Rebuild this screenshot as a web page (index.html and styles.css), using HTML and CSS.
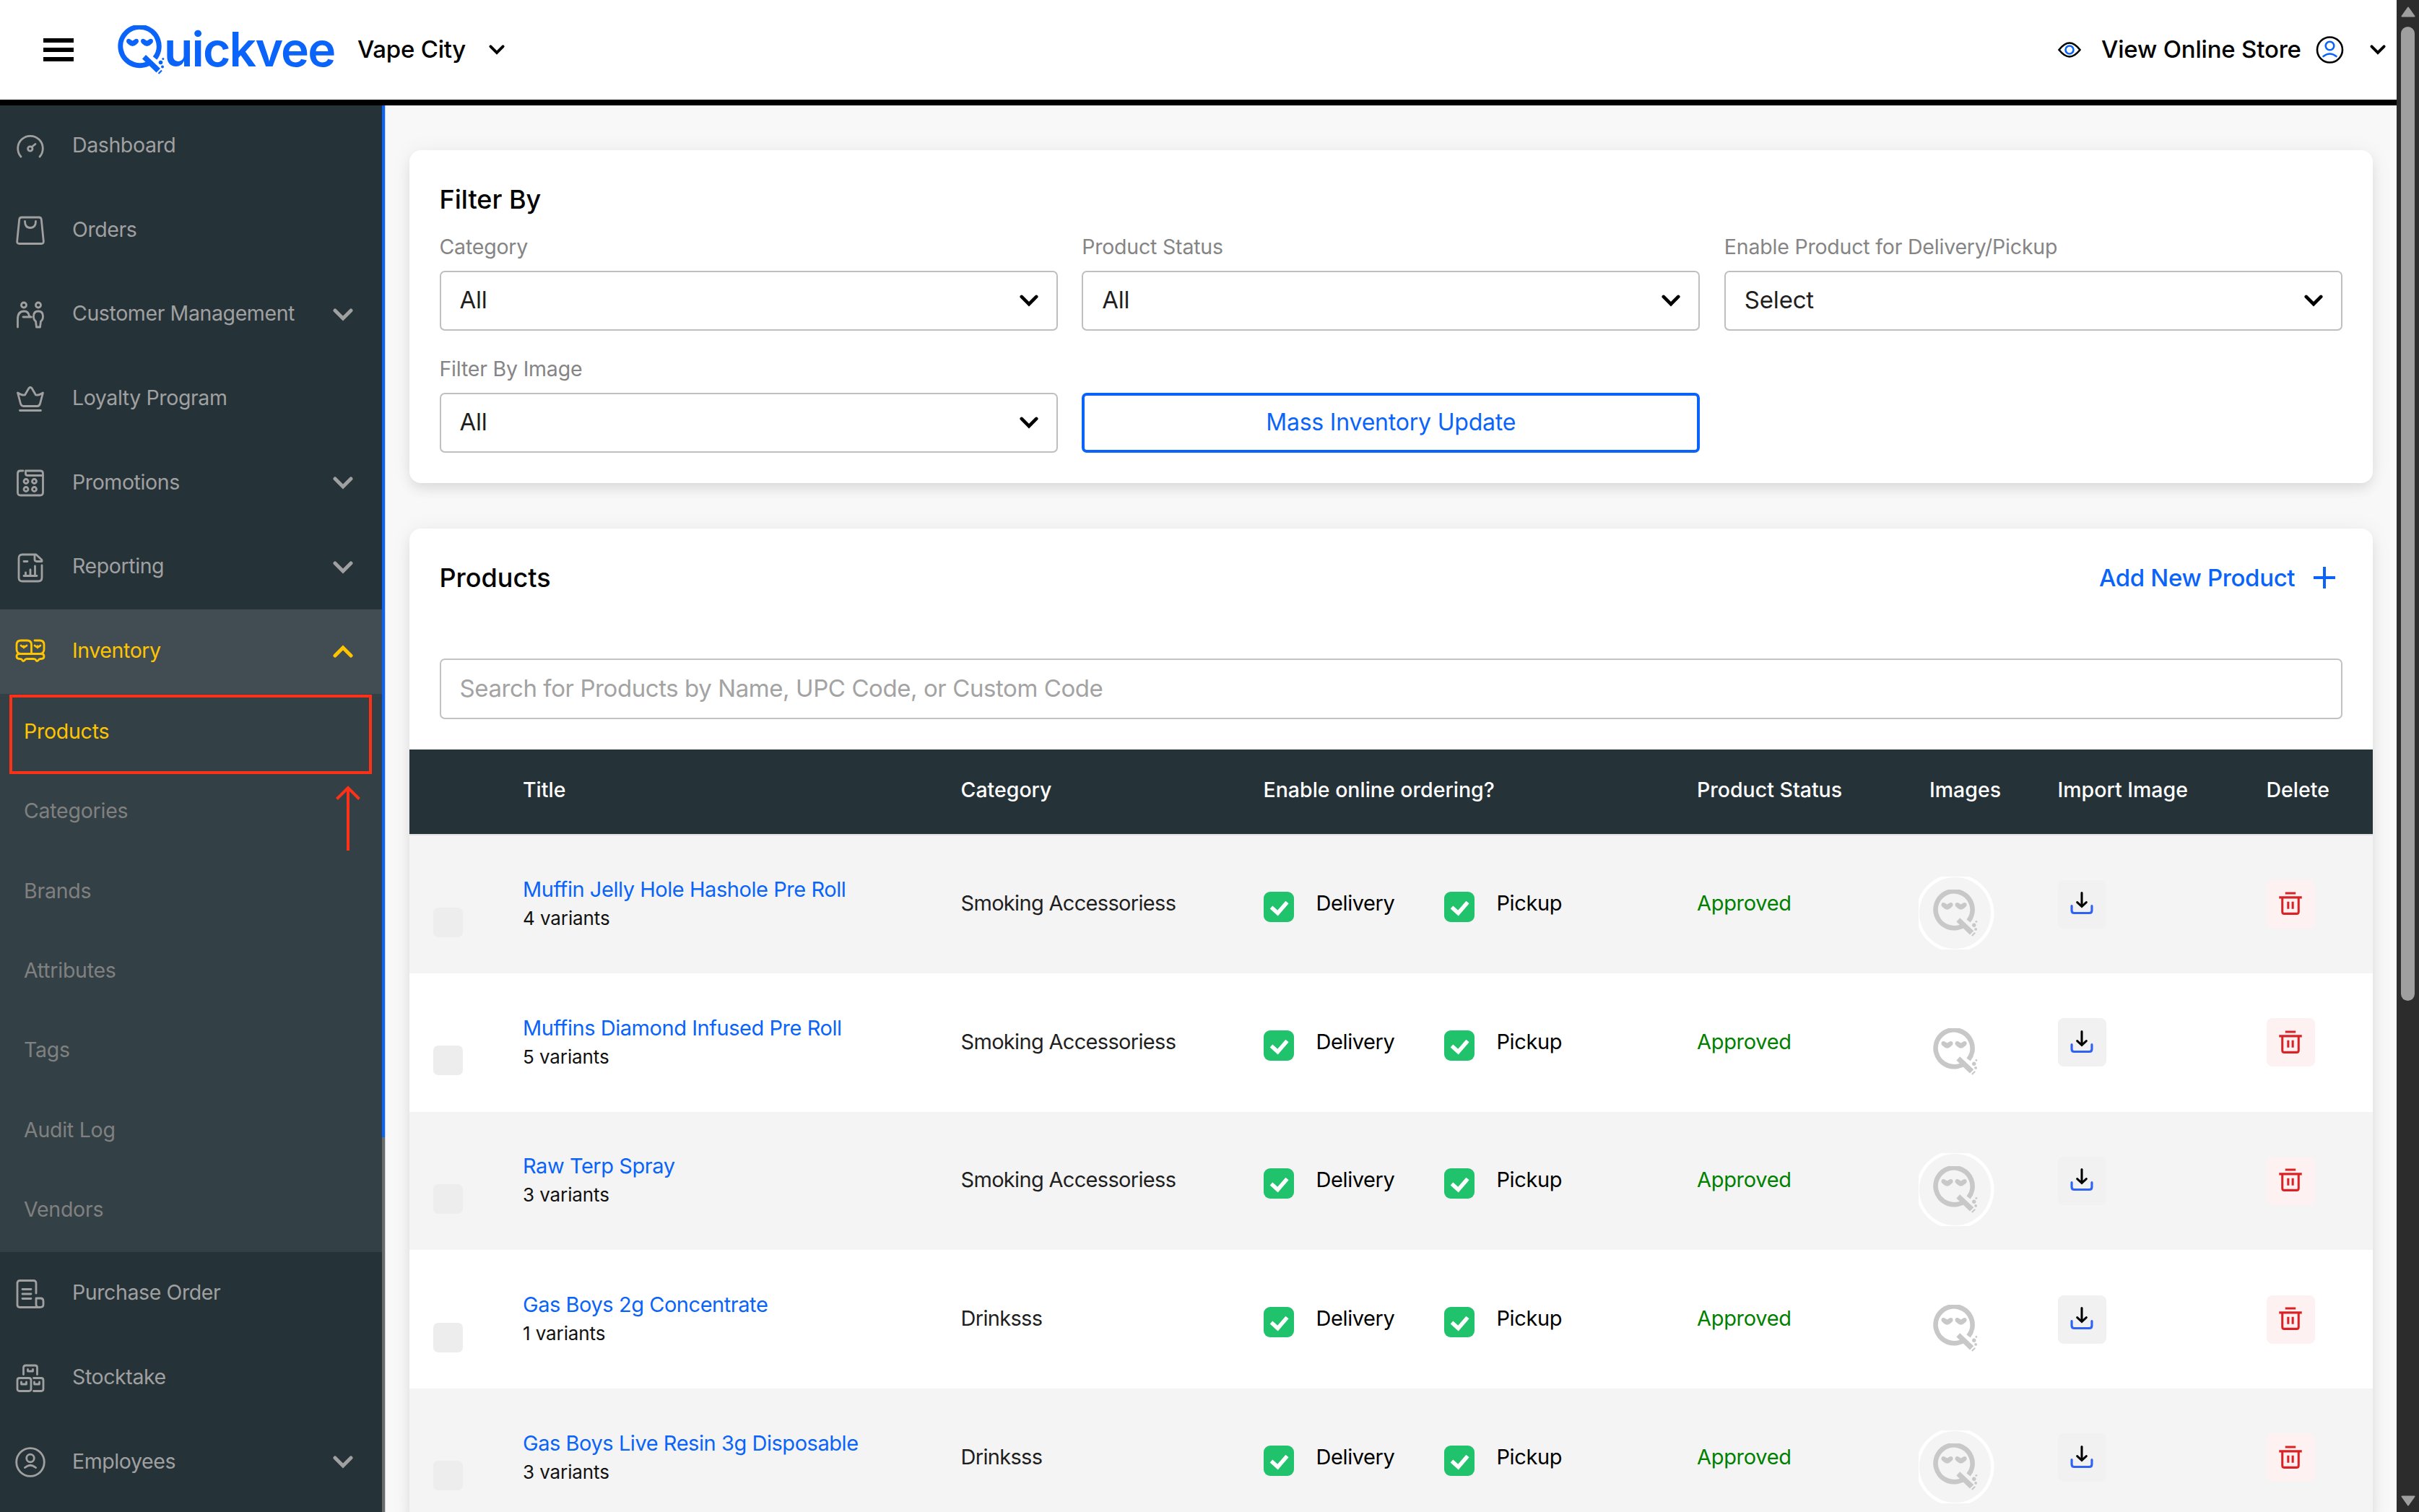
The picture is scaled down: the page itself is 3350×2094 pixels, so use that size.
FILE: index.html
```html
<!DOCTYPE html>
<html lang="en">
<head>
    <meta charset="UTF-8">
    <meta name="viewport" content="width=device-width, initial-scale=1.0">
    <title>Quickvee - Products</title>
    <link rel="stylesheet" href="styles.css">
</head>
<body>

    <!-- shared icons -->
    <svg class="sprite">
        <symbol id="chevron" viewBox="0 0 28 18">
            <path d="M3 3l11 11L25 3" fill="none" stroke="currentColor" stroke-width="5" stroke-linecap="round"/>
        </symbol>
        <symbol id="q-face" viewBox="0 0 66 68">
            <path d="M48 50A26.700 26.700 0 1 1 52.500 45.500" fill="none" stroke="currentColor" stroke-width="7"/>
            <path d="M13 22q.5-4 4.500-3l4 2.500 4-2.500q4-1 4.500 3 0 2.500-2.500 4-3 3-6 3t-6-3q-2.500-1.500-2.500-4zM33 22q.5-4 4.500-3l4 2.500 4-2.500q4-1 4.500 3 0 2.500-2.500 4-3 3-6 3t-6-3q-2.500-1.500-2.500-4z" fill="currentColor"/>
            <path d="M35 46.500l5-5.500 20 19-5.500 5.500z" fill="currentColor"/>
            <path d="M57.500 67l4.500-4.500" stroke="currentColor" stroke-width="2.200"/>
            <circle cx="60.500" cy="51.500" r="2.800" fill="currentColor"/>
            <circle cx="63.800" cy="46.500" r="1.500" fill="currentColor"/>
            <circle cx="63" cy="57.500" r="2" fill="currentColor"/>
        </symbol>
        <symbol id="check" viewBox="0 0 42 42">
            <path d="M10.500 21.500l9 8L32.500 14.500" fill="none" stroke="#fff" stroke-width="5.500"/>
        </symbol>
        <symbol id="import" viewBox="0 0 40 40">
            <path d="M20 4v20M13 18.500l7 6.500 7-6.500" fill="none" stroke="#000" stroke-width="3.400" stroke-linecap="round"/>
            <path d="M4.500 24v7q0 4 4 4h23q4 0 4-4v-7" fill="none" stroke="#2f62f5" stroke-width="3.500" stroke-linecap="round"/>
        </symbol>
        <symbol id="trash" viewBox="0 0 40 40">
            <path d="M12 4.500h16M2.500 11h35M7.500 11v22q0 3 3 3h19q3 0 3-3V11M16.500 17.500v11M23.500 17.500v11" fill="none" stroke="#d92226" stroke-width="3.400"/>
        </symbol>
    </svg>

    <div class="window">
        <div class="app">

            <header class="topbar">
                <div class="burger"><span></span><span></span><span></span></div>
                <div class="logo">
                    <svg class="logo-q"><use href="#q-face"/></svg>
                    <span class="logo-text">uickvee</span>
                </div>
                <span class="store-name">Vape City</span>
                <svg class="top-chevron"><use href="#chevron"/></svg>
                <svg class="eye" viewBox="0 0 32 22" fill="none" stroke-width="2.600">
                    <path d="M1.500 11Q9 1.500 16 1.500T30.500 11Q23 20.500 16 20.500T1.500 11z" stroke="#000"/>
                    <circle cx="16" cy="11" r="5.500" stroke="#0a64f9"/>
                </svg>
                <span class="view-store">View Online Store</span>
                <svg class="user" viewBox="0 0 38 38" fill="none" stroke-width="2.600">
                    <circle cx="19" cy="19" r="17.500" stroke="#000"/>
                    <circle cx="19" cy="13.500" r="5.800" stroke="#0a64f9"/>
                    <path d="M10 28q9-7 18 0" stroke="#0a64f9" stroke-linecap="round"/>
                </svg>
                <svg class="top-chevron last"><use href="#chevron"/></svg>
            </header>

            <div class="body">
                <aside class="sidebar">
                    <nav class="menu">
                        <div class="menu-item">
                            <svg class="icon" viewBox="0 0 42 42"><path d="M8 36A17.300 17.300 0 1 1 34 36M23 22.500l5-4"/><circle cx="20.800" cy="25" r="3.200"/></svg>
                            <span>Dashboard</span>
                        </div>
                        <div class="menu-item">
                            <svg class="icon" viewBox="0 0 42 42"><path d="M9 3h24q3 0 3.300 3l3 30q.3 3.500-3 3.500h-30.600q-3.300 0-3-3.500l3-30q.3-3 3.300-3zM13.500 8.500q0 9 7.500 9t7.500-9"/></svg>
                            <span>Orders</span>
                        </div>
                        <div class="menu-item">
                            <svg class="icon" viewBox="0 0 42 42"><circle cx="12" cy="7.500" r="3.500"/><circle cx="32" cy="7.500" r="3.500"/><path d="M3.500 38V27q0-11 9-11 6 0 7 7l3 1H11M32 16q6.500 0 6.500 7 0 5-3 7l-1 8h-5l-1-8q-3-2-3-7 0-7 6.500-7z"/></svg>
                            <span>Customer Management</span>
                            <svg class="arrow"><use href="#chevron"/></svg>
                        </div>
                        <div class="menu-item">
                            <svg class="icon" viewBox="0 0 42 42"><path d="M3.500 13l4 15q1 3.500 4 3.500h19q3 0 4-3.500l4-15q-6 4-10 3l-5.500-9.500q-2-2-4 0L13.500 16q-4 1-10-3zM6.500 37.500h29"/></svg>
                            <span>Loyalty Program</span>
                        </div>
                        <div class="menu-item">
                            <svg class="icon" viewBox="0 0 42 42"><path d="M11 4H7Q3.500 4 3.500 8v26q0 4 4 4h27q4 0 4-4V8q0-4-4-4H14.500v4q0 2.500 3 2.500h21"/><circle cx="15" cy="18.500" r="3"/><circle cx="26.500" cy="18.500" r="3"/><circle cx="15" cy="29.500" r="3"/><circle cx="26.500" cy="29.500" r="3"/></svg>
                            <span>Promotions</span>
                            <svg class="arrow"><use href="#chevron"/></svg>
                        </div>
                        <div class="menu-item">
                            <svg class="icon" viewBox="0 0 42 42"><path d="M37 18v17q0 5-5 5H10q-5 0-5-5V8q0-5 5-5h19l8 7.500v2h-7q-3 0-3-3V3M12 12.500h5M12 32.500h18M14.500 32v-4M21 32v-8M27.500 32V19"/></svg>
                            <span>Reporting</span>
                            <svg class="arrow"><use href="#chevron"/></svg>
                        </div>
                        <div class="menu-item active">
                            <svg class="icon" viewBox="0 0 42 42"><path d="M8 6h8.500q6 0 6 6v12.500H8q-6 0-6-6.500v-6q0-6 6-6zM27 6h7q6 0 6 6v6q0 6.500-6 6.500H22M8 13q4 4 8 0M27 13q4 4 8 0M12 14v2M31 14v2M6 24.500q-4 0-4 3.500t4 3.500h1q2 0 3 2t3 0q1-2 3-2h10q2 0 3 2t3 0q1-2 3-2h1q4 0 4-3.500t-4-3.500"/></svg>
                            <span>Inventory</span>
                            <svg class="arrow up"><use href="#chevron"/></svg>
                        </div>
                        <div class="submenu">
                            <div class="sub-item selected">Products</div>
                            <div class="sub-item">Categories</div>
                            <div class="sub-item">Brands</div>
                            <div class="sub-item">Attributes</div>
                            <div class="sub-item">Tags</div>
                            <div class="sub-item">Audit Log</div>
                            <div class="sub-item">Vendors</div>
                            <div class="mark-box"></div>
                            <svg class="mark-arrow" viewBox="0 0 36 90"><path d="M18 90V3M2.500 18.500L18 3l15.500 15.500" fill="none" stroke="#fc3118" stroke-width="4"/></svg>
                        </div>
                        <div class="menu-item">
                            <svg class="icon" viewBox="0 0 42 42"><path d="M29 20V6q0-3.500-3.500-3.500H6.500Q3 2.500 3 6v30q0 3.500 3.500 3.500H33M29 27h6q4 0 4 4v5q0 3.500-5 3.500t-5-3.500zM10 14.500h12M10 21h12M10 27.500h12"/></svg>
                            <span>Purchase Order</span>
                        </div>
                        <div class="menu-item">
                            <svg class="icon" viewBox="0 0 42 42"><path d="M11.500 15.500V6q0-3 3-3h13q3 0 3 3v9.500M6 20.500h13q3 0 3 3v12q0 3-3 3H6q-3 0-3-3v-12q0-3 3-3zM25.500 20.500H36q3 0 3 3v12q0 3-3 3H25.500M17.500 8.500v2.500h7V8.500M8.500 26v3h7v-3M26.500 26v3h7v-3"/></svg>
                            <span>Stocktake</span>
                        </div>
                        <div class="menu-item">
                            <svg class="icon" viewBox="0 0 42 42"><circle cx="21" cy="21" r="19.300"/><circle cx="21" cy="15.500" r="5.300"/><path d="M13.500 28.500q7.500-6.500 15 0"/></svg>
                            <span>Employees</span>
                            <svg class="arrow"><use href="#chevron"/></svg>
                        </div>
                    </nav>
                    <div class="side-scroll"><div class="side-thumb"></div></div>
                </aside>

                <main class="content">
                    <section class="card filter-card">
                        <h2>Filter By</h2>
                        <div class="filters">
                            <div>
                                <label>Category</label>
                                <div class="select"><span>All</span><svg><use href="#chevron"/></svg></div>
                            </div>
                            <div>
                                <label>Product Status</label>
                                <div class="select"><span>All</span><svg><use href="#chevron"/></svg></div>
                            </div>
                            <div>
                                <label>Enable Product for Delivery/Pickup</label>
                                <div class="select"><span>Select</span><svg><use href="#chevron"/></svg></div>
                            </div>
                            <div>
                                <label>Filter By Image</label>
                                <div class="select"><span>All</span><svg><use href="#chevron"/></svg></div>
                            </div>
                            <button class="mass-btn">Mass Inventory Update</button>
                        </div>
                    </section>

                    <section class="card products-card">
                        <div class="products-head">
                            <h2>Products</h2>
                            <span class="add-new">Add New Product</span>
                            <svg class="plus" viewBox="0 0 30 30"><path d="M15 0v30M0 15h30" stroke="#0a64f9" stroke-width="4"/></svg>
                        </div>
                        <div class="search">Search for Products by Name, UPC Code, or Custom Code</div>

                        <div class="row thead">
                            <span></span>
                            <span>Title</span>
                            <span>Category</span>
                            <span>Enable online ordering?</span>
                            <span>Product Status</span>
                            <span>Images</span>
                            <span>Import Image</span>
                            <span>Delete</span>
                        </div>

                        <div class="row odd">
                            <div class="pick"></div>
                            <div class="title"><a>Muffin Jelly Hole Hashole Pre Roll</a><small>4 variants</small></div>
                            <div class="cat">Smoking Accessoriess</div>
                            <div class="order"><i><svg><use href="#check"/></svg></i><span>Delivery</span><i><svg><use href="#check"/></svg></i><span>Pickup</span></div>
                            <div class="status">Approved</div>
                            <div class="thumb"><svg class="thumb-q"><use href="#q-face"/></svg></div>
                            <div class="btn import"><svg><use href="#import"/></svg></div>
                            <div class="btn delete"><svg><use href="#trash"/></svg></div>
                        </div>
                        <div class="row">
                            <div class="pick"></div>
                            <div class="title"><a>Muffins Diamond Infused Pre Roll</a><small>5 variants</small></div>
                            <div class="cat">Smoking Accessoriess</div>
                            <div class="order"><i><svg><use href="#check"/></svg></i><span>Delivery</span><i><svg><use href="#check"/></svg></i><span>Pickup</span></div>
                            <div class="status">Approved</div>
                            <div class="thumb"><svg class="thumb-q"><use href="#q-face"/></svg></div>
                            <div class="btn import"><svg><use href="#import"/></svg></div>
                            <div class="btn delete"><svg><use href="#trash"/></svg></div>
                        </div>
                        <div class="row odd">
                            <div class="pick"></div>
                            <div class="title"><a>Raw Terp Spray</a><small>3 variants</small></div>
                            <div class="cat">Smoking Accessoriess</div>
                            <div class="order"><i><svg><use href="#check"/></svg></i><span>Delivery</span><i><svg><use href="#check"/></svg></i><span>Pickup</span></div>
                            <div class="status">Approved</div>
                            <div class="thumb"><svg class="thumb-q"><use href="#q-face"/></svg></div>
                            <div class="btn import"><svg><use href="#import"/></svg></div>
                            <div class="btn delete"><svg><use href="#trash"/></svg></div>
                        </div>
                        <div class="row">
                            <div class="pick"></div>
                            <div class="title"><a>Gas Boys 2g Concentrate</a><small>1 variants</small></div>
                            <div class="cat">Drinksss</div>
                            <div class="order"><i><svg><use href="#check"/></svg></i><span>Delivery</span><i><svg><use href="#check"/></svg></i><span>Pickup</span></div>
                            <div class="status">Approved</div>
                            <div class="thumb"><svg class="thumb-q"><use href="#q-face"/></svg></div>
                            <div class="btn import"><svg><use href="#import"/></svg></div>
                            <div class="btn delete"><svg><use href="#trash"/></svg></div>
                        </div>
                        <div class="row odd">
                            <div class="pick"></div>
                            <div class="title"><a>Gas Boys Live Resin 3g Disposable</a><small>3 variants</small></div>
                            <div class="cat">Drinksss</div>
                            <div class="order"><i><svg><use href="#check"/></svg></i><span>Delivery</span><i><svg><use href="#check"/></svg></i><span>Pickup</span></div>
                            <div class="status">Approved</div>
                            <div class="thumb"><svg class="thumb-q"><use href="#q-face"/></svg></div>
                            <div class="btn import"><svg><use href="#import"/></svg></div>
                            <div class="btn delete"><svg><use href="#trash"/></svg></div>
                        </div>
                    </section>
                </main>
            </div>
        </div>

        <div class="page-scroll">
            <svg class="scroll-arrow" viewBox="0 0 20 15"><path d="M10 1.500L18.500 13.500H1.500z" fill="#9f9f9f" stroke="#9f9f9f" stroke-width="2" stroke-linejoin="round"/></svg>
            <div class="page-thumb"></div>
            <svg class="scroll-arrow down" viewBox="0 0 20 15"><path d="M10 1.500L18.500 13.500H1.500z" fill="#9f9f9f" stroke="#9f9f9f" stroke-width="2" stroke-linejoin="round"/></svg>
        </div>
    </div>

</body>
</html>
```
FILE: styles.css
```css
* {
    box-sizing: border-box;
}

body {
    margin: 0;
    font-family: Inter, 'Liberation Sans', sans-serif;
    font-size: 29px;
    color: #000;
    background: #f8f8f8;
    overflow: hidden;
}

.sprite {
    display: none;
}

.window {
    display: flex;
    height: 2094px;
    overflow: hidden;
}

.app {
    width: 3319px;
    display: flex;
    flex-direction: column;
}

/* top bar */
.topbar {
    flex: none;
    height: 146px;
    background: #fff;
    border-bottom: 8.5px solid #000;
    display: flex;
    align-items: center;
    padding: 0 15px 0 60px;
    font-size: 33px;
    font-weight: 500;
}

.burger {
    width: 42px;
    display: flex;
    flex-direction: column;
    gap: 7px;
}

.burger span {
    height: 6px;
    background: #000;
}

.logo {
    display: flex;
    align-items: center;
    width: 302px;
    margin-left: 60px;
    color: #0a64f9;
}

.logo-q {
    flex: none;
    width: 66px;
    height: 68px;
}

.logo-text {
    font-size: 66px;
    font-weight: 600;
    line-height: 68px;
    letter-spacing: -1.9px;
    margin-left: -1px;
    padding-bottom: 2px;
}

.store-name {
    margin-left: 31px;
    margin-bottom: 3px;
    width: 182px;
    letter-spacing: -0.25px;
}

.top-chevron {
    width: 22px;
    height: 14px;
}

.top-chevron.last {
    margin-left: 36px;
}

.eye {
    width: 32px;
    height: 22px;
    margin-left: auto;
}

.view-store {
    margin: 0 23px 3px 28px;
    width: 274px;
    white-space: nowrap;
    letter-spacing: -0.2px;
}

.user {
    width: 39px;
    height: 38px;
}

.body {
    flex: 1;
    display: flex;
    min-height: 0;
}

/* sidebar */
.sidebar {
    width: 534px;
    display: flex;
    background: #253238;
    color: #a0a0a0;
    overflow: hidden;
}

.menu {
    width: 529px;
    margin-top: -2px;
}

.menu-item {
    height: 116.7px;
    display: flex;
    align-items: center;
    padding: 0 40px 0 21px;
    font-size: 28.5px;
    letter-spacing: -0.4px;
}

.menu-item span {
    flex: 1;
    margin-left: 37px;
    padding-bottom: 4px;
    white-space: nowrap;
}

.icon {
    width: 42px;
    height: 42px;
    fill: none;
    stroke: currentColor;
    stroke-width: 2.8;
    stroke-linecap: round;
    stroke-linejoin: round;
}

.arrow {
    width: 28px;
    height: 18px;
}

.arrow.up {
    transform: rotate(180deg);
}

.menu-item.active {
    background: #414d52;
    color: #ffc400;
}

.submenu {
    position: relative;
    background: #334046;
    color: #808080;
}

.sub-item {
    height: 110.4px;
    padding-left: 33px;
    line-height: 104px;
    font-size: 28.5px;
    letter-spacing: -0.25px;
}

.sub-item.selected {
    color: #ffc400;
}

/* highlight drawn over the submenu */
.mark-box {
    position: absolute;
    left: 13px;
    top: 1px;
    width: 502px;
    height: 110px;
    border: 4px solid #fc3118;
}

.mark-arrow {
    position: absolute;
    left: 464px;
    top: 127px;
    width: 36px;
    height: 90px;
}

.side-scroll {
    width: 5px;
    background: #6b6b6b;
    border-right: 1px solid #c8cdd6;
}

.side-thumb {
    height: 1429px;
    background: #0a64f9;
}

/* content */
.content {
    flex: 1;
    padding: 62px 33px 0 32.5px;
    overflow: hidden;
}

.card {
    background: #fff;
    border-radius: 16px;
    box-shadow: 0 0 30px rgba(0, 0, 0, 0.05), 0 9px 18px -2px rgba(0, 0, 0, 0.1);
}

h2 {
    margin: 0;
    font-size: 36px;
    font-weight: 500;
    line-height: 50px;
}

.filter-card {
    padding: 43px 42px 42px;
    height: 461px;
}

.filters {
    display: grid;
    grid-template-columns: repeat(3, 1fr);
    gap: 32.5px 33.5px;
    margin-top: 20.5px;
}

label {
    display: block;
    height: 40px;
    line-height: 40px;
    margin-bottom: 13px;
    color: #858585;
    font-size: 28.5px;
    letter-spacing: -0.2px;
}

.select {
    height: 83.5px;
    border: 2px solid #bfbfbf;
    border-radius: 7px;
    display: flex;
    align-items: center;
    justify-content: space-between;
    padding: 0 25px 0 26px;
    font-size: 33px;
    letter-spacing: -0.2px;
    color: #1f1f1f;
}

.select span {
    padding-bottom: 2px;
}

.select svg {
    width: 26px;
    height: 17px;
    color: #000;
}

.mass-btn {
    align-self: end;
    height: 83.5px;
    padding-bottom: 3px;
    border: 4px solid #0a64f9;
    border-radius: 7px;
    background: #fff;
    color: #0a64f9;
    font-family: inherit;
    font-size: 32px;
    letter-spacing: -0.2px;
}

.products-card {
    margin-top: 62.5px;
    padding-top: 43px;
}

.products-head {
    display: flex;
    align-items: center;
    padding: 0 52px 0 42px;
}

.add-new {
    margin-left: auto;
    width: 270px;
    white-space: nowrap;
    font-size: 33px;
    font-weight: 500;
    letter-spacing: -0.35px;
    color: #0a64f9;
}

.plus {
    width: 30px;
    height: 30px;
    margin-left: 27px;
}

.search {
    margin: 87.5px 42px 41.5px;
    height: 84px;
    line-height: 78px;
    padding-left: 26px;
    border: 2px solid #c2c2c2;
    border-radius: 7px;
    font-size: 33px;
    letter-spacing: -0.42px;
    color: #a3a3a3;
}

/* products table */
.row {
    display: grid;
    grid-template-columns: 157.5px 606.5px 419px 600.5px 322px 177.5px 289px 147.5px;
    align-items: center;
    height: 191.6px;
    background: #fff;
}

.row.odd {
    background: #f4f4f4;
}

.row.thead {
    height: 119px;
    padding-bottom: 5px;
    background: #253238;
    border-bottom: 2px solid #e0e0e0;
    color: #fff;
    font-size: 28.5px;
    font-weight: 500;
}

.pick {
    width: 41px;
    height: 41px;
    margin: 50px 0 0 33px;
    border-radius: 7px;
    background: #ededed;
}

.title {
    line-height: 40px;
    margin-bottom: 0;
}

.title a {
    display: block;
    letter-spacing: -0.45px;
    color: #0a64f9;
}

.title small {
    display: block;
    font-size: 26px;
    letter-spacing: -0.1px;
    color: #111;
}

.cat,
.status {
    padding-bottom: 3px;
    color: #1f1f1f;
    letter-spacing: -0.68px;
}

.status {
    letter-spacing: -0.3px;
    color: #008000;
}

.order {
    display: flex;
    align-items: center;
    letter-spacing: -0.4px;
}

.order i {
    width: 42px;
    height: 42px;
    margin-top: 8px;
    border-radius: 9px;
    background: #20c26c;
}

.order i svg {
    width: 42px;
    height: 42px;
}

.order span {
    width: 177px;
    margin-left: 31px;
    padding-bottom: 3px;
}

.thumb {
    width: 105px;
    height: 101px;
    margin: 25px 0 0 -15px;
    padding: 18px 0 0 19px;
    overflow: hidden;
    color: #c8c8c8;
    background: radial-gradient(circle at 50.5px 50.5px, transparent 49px, #fff 50px, #fff 53.5px, transparent 54.5px);
}

.thumb-q {
    width: 63px;
    height: 65px;
}

.btn {
    width: 67px;
    height: 67px;
    border-radius: 8px;
    display: flex;
    align-items: center;
    justify-content: center;
    background: #f1f1f1;
}

.btn.delete {
    background: #fef1f1;
}

.btn svg {
    width: 36px;
    height: 38px;
    margin-bottom: 2px;
}

/* page scrollbar */
.page-scroll {
    width: 31px;
    background: #2c2c2c;
    display: flex;
    flex-direction: column;
    align-items: center;
    padding: 9px 0 8px;
}

.scroll-arrow {
    width: 20px;
    height: 15px;
}

.scroll-arrow.down {
    margin-top: auto;
    transform: rotate(180deg);
}

.page-thumb {
    width: 19px;
    height: 1349px;
    margin-top: 13px;
    border-radius: 10px;
    background: #9f9f9f;
}
```
